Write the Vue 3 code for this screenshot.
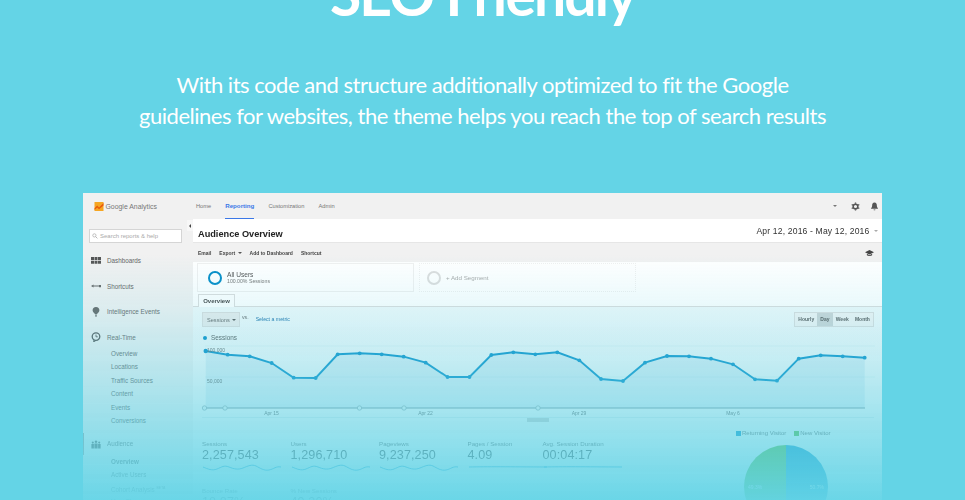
<script setup>
import { computed } from 'vue'

const navTop = [
  { label: 'Dashboards', icon: 'grid' },
  { label: 'Shortcuts', icon: 'arrow' },
  { label: 'Intelligence Events', icon: 'bulb' },
  { label: 'Real-Time', icon: 'clock' }
]
const realtime = ['Overview', 'Locations', 'Traffic Sources', 'Content', 'Events', 'Conversions']

const points = [
  [205.7, 351], [227.7, 354.7], [249.7, 356.3], [271.7, 363], [293.7, 377.7], [315.7, 378],
  [337.7, 354.3], [359.7, 353.3], [381.7, 354.3], [403.7, 356.7], [425.7, 362.7], [447.5, 377],
  [469.5, 377], [491.3, 355], [513.3, 352.3], [535.3, 354.3], [557.3, 352.3], [579.3, 360.3],
  [601, 379], [623, 381], [645, 362.7], [667, 356], [689, 356.3], [711, 358.7], [733, 364.3],
  [755, 379.3], [777, 380.7], [798.7, 358.7], [820.7, 355.3], [842.7, 356.3], [864.7, 357.7]
]
const line = computed(() => points.map(p => p.join(',')).join(' '))
const area = computed(() => `205.7,408 ${line.value} 864.7,408`)
const xLabels = [
  { x: 271.5, t: 'Apr 15' },
  { x: 425.5, t: 'Apr 22' },
  { x: 579, t: 'Apr 29' },
  { x: 733, t: 'May 6' }
]
const annotations = [204.5, 225, 359.5, 404, 538]

const wave = 'M1 5 C6 7 10 9 15 7 S22 3 27 5 S36 8 41 6 S50 2 54 4 S62 9 67 8 S74 4 79 5'
const flat = 'M1 5 C20 4.6 40 4.8 79 5'
const metrics = [
  { label: 'Sessions', value: '2,257,543', spark: wave },
  { label: 'Users', value: '1,296,710', spark: wave },
  { label: 'Pageviews', value: '9,237,250', spark: wave },
  { label: 'Pages / Session', value: '4.09', spark: flat },
  { label: 'Avg. Session Duration', value: '00:04:17', spark: flat }
]
const metrics2 = [
  { label: 'Bounce Rate', value: '18.87%' },
  { label: '% New Sessions', value: '49.30%' }
]
</script>

<template>
  <div class="page">
    <h1 class="title">SEO Friendly</h1>
    <p class="lead">With its code and structure additionally optimized to fit the Google<br>guidelines for websites, the theme helps you reach the top of search results</p>

    <div class="shot">
      <div class="shot-inner">
        <header class="topbar">
          <div class="brand">
            <svg class="ga-logo" viewBox="0 0 10 10">
              <rect width="10" height="10" fill="#f6a623" />
              <path d="M0 7 L3 4 L5 6 L10 1 L10 4 L5 8 L3 6 L0 9Z" fill="#e8590c" />
            </svg>
            <span>Google Analytics</span>
          </div>
          <nav class="topnav">
            <a>Home</a>
            <a class="on">Reporting</a>
            <a>Customization</a>
            <a>Admin</a>
          </nav>
          <div class="topicons">
            <i class="caret"></i>
            <svg class="ico gear" viewBox="0 0 10 10">
              <circle cx="5" cy="5" r="2.6" fill="none" stroke="#555" stroke-width="1.7" />
              <path d="M5 0.5V2M5 8V9.5M0.8 2.8L2.2 3.6M7.8 6.4L9.2 7.2M0.8 7.2L2.2 6.4M7.8 3.6L9.2 2.8" stroke="#555" stroke-width="1.5" />
            </svg>
            <svg class="ico" viewBox="0 0 10 10">
              <path d="M5 .5C3 .5 2.4 2 2.4 3.8 2.4 6 1.2 6.6 1 7.6H9C8.8 6.6 7.6 6 7.6 3.8 7.6 2 7 .5 5 .5ZM4 8.2H6C6 9.6 4 9.6 4 8.2Z" fill="#555" />
            </svg>
          </div>
        </header>

        <div class="body">
          <aside class="side">
            <div class="search">
              <svg class="search-ico" viewBox="0 0 10 10">
                <circle cx="4" cy="4" r="2.7" fill="none" stroke="#aaa" stroke-width="1.2" />
                <path d="M6 6L9 9" stroke="#aaa" stroke-width="1.4" />
              </svg>
              Search reports &amp; help
            </div>
            <div class="nav-row" v-for="item in navTop" :key="item.label">
              <svg class="nav-ico" viewBox="0 0 10 10">
                <path v-if="item.icon === 'grid'" d="M0 1H3V4H0ZM3.5 1H6.5V4H3.5ZM7 1H10V4H7ZM0 4.7H3V7.7H0ZM3.5 4.7H6.5V7.7H3.5ZM7 4.7H10V7.7H7Z" fill="#555" />
                <path v-else-if="item.icon === 'arrow'" d="M0 5L2.5 3.5V4.6H10V5.6H2.5V6.5ZM8 4H10V6.2H8Z" fill="#666" />
                <path v-else-if="item.icon === 'bulb'" d="M5 0C2.8 0 1.6 1.6 1.6 3.2 1.6 5 3.4 5.8 4 7.2H6C6.6 5.8 8.4 5 8.4 3.2 8.4 1.6 7.2 0 5 0ZM4.2 7.8H5.8L5.4 10H4.6Z" fill="#666" />
                <g v-else>
                  <circle cx="5" cy="4.6" r="3.8" fill="none" stroke="#555" stroke-width="1.3" />
                  <path d="M5 2.6V4.8H6.8M3 8L2.6 10 5 8.4" fill="none" stroke="#555" stroke-width=".9" />
                </g>
              </svg>
              {{ item.label }}
            </div>
            <div class="sub-list">
              <div class="sub" v-for="s in realtime" :key="s">{{ s }}</div>
            </div>
            <div class="nav-row audience">
              <svg class="nav-ico" viewBox="0 0 10 10">
                <path d="M5 1.4a1.3 1.3 0 1 1-.01 0ZM1.8 2.6a1 1 0 1 1-.01 0ZM8.2 2.6a1 1 0 1 1-.01 0ZM3.4 4.4H6.6V9.4H3.4ZM.4 5H2.9V9.4H.4ZM7.1 5H9.6V9.4H7.1Z" fill="#555" />
              </svg>
              Audience
            </div>
            <div class="sub-list">
              <div class="sub strong">Overview</div>
              <div class="sub">Active Users</div>
              <div class="sub">Cohort Analysis <sup>BETA</sup></div>
              <div class="sub">User Flow</div>
            </div>
          </aside>

          <main class="main">
            <div class="collapse"></div>
            <div class="titlebar">
              <h2>Audience Overview</h2>
              <div class="dates">Apr 12, 2016 - May 12, 2016 <i class="caret light"></i></div>
            </div>
            <div class="toolbar">
              <span>Email</span>
              <span>Export <i class="caret tiny"></i></span>
              <span>Add to Dashboard</span>
              <span>Shortcut</span>
              <svg class="cap" viewBox="0 0 12 10">
                <path d="M6 1L12 4 6 7 0 4ZM2.5 6V8C4 9.4 8 9.4 9.5 8V6L6 8Z" fill="#444" />
              </svg>
            </div>
            <div class="segments">
              <div class="seg">
                <span class="ring"></span>
                <div>
                  <div class="seg-name">All Users</div>
                  <div class="seg-sub">100.00% Sessions</div>
                </div>
              </div>
              <div class="seg add">
                <span class="ring grey"></span>
                <div class="seg-add">+ Add Segment</div>
              </div>
            </div>
            <div class="tabs"><div class="tab">Overview</div></div>

            <div class="panel">
              <div class="controls">
                <div class="select">Sessions <i class="caret tiny"></i></div>
                <span class="vs">vs.</span>
                <a class="metric-link">Select a metric</a>
                <div class="btns">
                  <span>Hourly</span>
                  <span class="on">Day</span>
                  <span>Week</span>
                  <span>Month</span>
                </div>
              </div>
              <div class="legend"><i class="dot"></i>Sessions</div>

              <svg class="chart" viewBox="193 343 689 82" width="689" height="82">
                <line x1="205" y1="346" x2="875" y2="346" stroke="#dfeef2" stroke-width=".6" />
                <line x1="205" y1="377" x2="875" y2="377" stroke="#dfeef2" stroke-width=".6" />
                <polygon :points="area" fill="#058dc7" fill-opacity=".1" />
                <polyline :points="line" fill="none" stroke="#058dc7" stroke-width="1.9" />
                <circle v-for="(p, i) in points" :key="i" :cx="p[0]" :cy="p[1]" :r="i === 0 ? 2.2 : 1.9" fill="#058dc7" />
                <line x1="204" y1="408" x2="865" y2="408" stroke="#7d929b" stroke-width="1" />
                <text x="207" y="352" class="axis">100,000</text>
                <text x="207" y="383" class="axis">50,000</text>
                <text v-for="l in xLabels" :key="l.t" :x="l.x" y="415" text-anchor="middle" class="axis">{{ l.t }}</text>
                <circle v-for="a in annotations" :key="a" :cx="a" cy="408" r="2.2" fill="#e8f4f6" stroke="#8a9ea6" stroke-width=".7" />
                <line x1="202" y1="417.5" x2="874" y2="417.5" stroke="#cfdfe4" stroke-width=".6" />
                <rect x="527" y="418" width="22" height="4" fill="#ccc" />
              </svg>

              <div class="lower">
                <div class="metrics">
                  <div class="metric" v-for="m in metrics" :key="m.label">
                    <div class="m-label">{{ m.label }}</div>
                    <div class="m-value">{{ m.value }}</div>
                    <svg class="spark" viewBox="0 0 80 12" width="80" height="12">
                      <path :d="m.spark" fill="none" stroke="#058dc7" stroke-width=".8" />
                    </svg>
                  </div>
                  <div class="metric" v-for="m in metrics2" :key="m.label">
                    <div class="m-label">{{ m.label }}</div>
                    <div class="m-value">{{ m.value }}</div>
                  </div>
                </div>
                <div class="pie-box">
                  <div class="pie-legend">
                    <i class="sq blue"></i>Returning Visitor
                    <i class="sq green"></i>New Visitor
                  </div>
                  <div class="pie">
                    <span class="pct left">49.3%</span>
                    <span class="pct right">50.7%</span>
                  </div>
                </div>
              </div>
            </div>
          </main>
        </div>
      </div>
      <div class="fade"></div>
    </div>
  </div>
</template>

<style>
html, body {
  margin: 0;
  background: #64d4e6;
}
</style>

<style scoped>
.page {
  height: 500px;
  overflow: hidden;
  background: #64d4e6;
  color: #fff;
  font-family: "Lato", "Liberation Sans", sans-serif;
  text-align: center;
}
.title {
  margin: -41px 0 0;
  font-size: 57px;
  line-height: 70px;
  font-weight: 700;
  letter-spacing: -1.9px;
}
.lead {
  margin: 40px 0 0;
  font-size: 22px;
  line-height: 31px;
  letter-spacing: -.48px;
  font-weight: 400;
}
.shot {
  position: relative;
  width: 799px;
  height: 307px;
  margin: 62px auto 0;
  overflow: hidden;
  text-align: left;
}
.shot-inner {
  height: 100%;
  font-family: "Liberation Sans", Arial, sans-serif;
  color: #444;
  background: #fff;
  filter: blur(.35px);
}
.fade {
  position: absolute;
  inset: 0;
  background: linear-gradient(to bottom, rgba(100, 212, 230, 0) 20%, rgba(100, 212, 230, .14) 37%, rgba(100, 212, 230, .45) 62%, rgba(100, 212, 230, .96) 100%);
  pointer-events: none;
}

/* top bar */
.topbar {
  height: 26px;
  display: flex;
  align-items: center;
  background: #f1f1f1;
}
.brand {
  width: 113px;
  display: flex;
  align-items: center;
  padding-left: 11px;
  box-sizing: border-box;
  font-size: 6.9px;
  color: #777;
  white-space: nowrap;
}
.ga-logo {
  width: 10px;
  height: 9px;
  margin-right: 1.5px;
}
.topnav {
  display: flex;
  height: 100%;
  gap: 14px;
  font-size: 5.7px;
  color: #777;
}
.topnav a {
  display: flex;
  align-items: center;
  height: 100%;
  box-sizing: border-box;
}
.topnav a.on {
  color: #3b78e7;
  font-size: 6.2px;
  font-weight: 700;
  border-bottom: 1px solid #3b78e7;
}
.topicons {
  margin-left: auto;
  display: flex;
  align-items: center;
  gap: 10px;
  padding-right: 3px;
}
.ico {
  width: 9px;
  height: 9px;
}
.caret {
  display: inline-block;
  width: 0;
  height: 0;
  border: 2px solid transparent;
  border-top: 2.5px solid #777;
  border-bottom: 0;
  margin-right: 4px;
}
.caret.light {
  border-top-color: #aaa;
  margin: 0 0 2px 2px;
}
.caret.tiny {
  margin: 0 0 1px 1px;
  border-top-color: #555;
}

/* layout */
.body {
  display: flex;
  height: 281px;
}
.side {
  width: 110px;
  flex: none;
  box-sizing: border-box;
  background: #f1f1f1;
  padding-top: 10px;
  font-size: 6.3px;
  color: #666;
}
.search {
  display: flex;
  align-items: center;
  width: 93px;
  height: 14px;
  margin: 0 0 5px 6px;
  box-sizing: border-box;
  background: #fff;
  border: 1px solid #d5d5d5;
  color: #aaa;
  font-size: 6px;
  padding-left: 2px;
}
.search-ico {
  width: 6px;
  height: 6px;
  margin-right: 2px;
}
.nav-row {
  display: flex;
  align-items: center;
  height: 25.5px;
  padding-left: 8px;
  white-space: nowrap;
}
.nav-ico {
  width: 10px;
  height: 10px;
  margin-right: 6px;
}
.sub-list {
  margin-top: -3.2px;
}
.sub {
  height: 13.5px;
  line-height: 13.5px;
  padding-left: 28px;
  white-space: nowrap;
}
.sub.strong {
  font-weight: 700;
}
.sub sup {
  font-size: 3.5px;
}
.audience {
  margin-top: 4.7px;
  border-left: 1px solid #999;
  padding-left: 7px;
  height: 22px;
}
.audience + .sub-list {
  margin-top: 0;
}

.main {
  flex: 1;
  min-width: 0;
  position: relative;
  background: #fff;
}
.collapse {
  position: absolute;
  left: -6px;
  top: 1px;
  width: 6px;
  height: 11px;
  background: #f7f7f7;
  display: flex;
  align-items: center;
  justify-content: center;
}
.collapse::before {
  content: "";
  border: 2px solid transparent;
  border-right: 2px solid #444;
  border-left: 0;
}
.titlebar {
  height: 23px;
  display: flex;
  align-items: center;
  justify-content: space-between;
  padding: 0 4px 0 5px;
}
.titlebar h2 {
  margin: 6px 0 0;
  font-size: 9.2px;
  font-weight: 700;
  color: #222;
}
.dates {
  font-size: 8.6px;
  letter-spacing: .15px;
  color: #333;
  white-space: nowrap;
}
.toolbar {
  height: 20px;
  display: flex;
  align-items: center;
  gap: 8px;
  padding: 0 8px 0 5px;
  background: #f1f1f1;
  border-top: 1px solid #e6e6e6;
  box-sizing: border-box;
  font-size: 5px;
  font-weight: 700;
  color: #444;
}
.cap {
  width: 9px;
  height: 8px;
  margin-left: auto;
}
.segments {
  height: 32px;
  display: flex;
  gap: 5px;
  padding: 1px 0 0 4px;
  box-sizing: border-box;
}
.seg {
  width: 217px;
  height: 29px;
  display: flex;
  align-items: center;
  gap: 5px;
  padding-left: 10px;
  box-sizing: border-box;
  border: 1px solid #f0f0f0;
}
.seg.add {
  border-style: dotted;
  padding-left: 7px;
}
.ring {
  width: 14px;
  height: 14px;
  box-sizing: border-box;
  border-radius: 50%;
  border: 2.5px solid #058dc7;
}
.ring.grey {
  border-color: #ddd;
}
.seg-name {
  font-size: 6.6px;
  color: #555;
}
.seg-sub {
  font-size: 5.2px;
  color: #777;
}
.seg-add {
  font-size: 6.2px;
  color: #aaa;
}
.tabs {
  height: 13px;
  padding-left: 5px;
  box-sizing: border-box;
  border-bottom: 1px solid #ddd;
}
.tab {
  width: 37px;
  height: 13px;
  box-sizing: border-box;
  background: #fff;
  border: 1px solid #ddd;
  border-bottom: 0;
  text-align: center;
  font-size: 6px;
  line-height: 12px;
  font-weight: 700;
  color: #444;
}

/* chart panel */
.panel {
  background: linear-gradient(#f1f9fb, #fafafa 25%);
}
.controls {
  height: 25px;
  display: flex;
  align-items: center;
  padding: 0 8px 1px 9px;
  box-sizing: border-box;
  font-size: 5.2px;
}
.select {
  width: 38px;
  height: 15px;
  line-height: 15px;
  box-sizing: border-box;
  padding-left: 4px;
  background: #ececec;
  border: 1px solid #ddd;
  color: #666;
  font-size: 5.6px;
}
.vs {
  margin: -4px 0 0 2px;
  color: #666;
}
.metric-link {
  margin-left: 7px;
  color: #1a6fa8;
  font-size: 5.2px;
}
.btns {
  margin-left: auto;
  display: flex;
  border: 1px solid #ddd;
  height: 15px;
  box-sizing: border-box;
  background: #f4f4f4;
}
.btns span {
  line-height: 13px;
  padding: 0 3.1px;
  font-size: 5px;
  font-weight: 700;
  color: #555;
}
.btns span.on {
  background: #cfd4d5;
}
.legend {
  height: 11px;
  display: flex;
  align-items: center;
  padding-left: 10px;
  font-size: 6.4px;
  color: #555;
}
.dot {
  width: 4px;
  height: 4px;
  border-radius: 50%;
  background: #058dc7;
  margin-right: 4px;
}
.chart {
  display: block;
}
.axis {
  font-size: 5px;
  fill: #666;
  font-family: "Liberation Sans", Arial, sans-serif;
}
.lower {
  display: flex;
  padding: 13px 0 0 9px;
}
.metrics {
  width: 424px;
  display: grid;
  grid-template-columns: 88.5px 88.5px 88.5px 75px 83px;
  grid-auto-rows: 47px;
}
.metric {
  box-sizing: border-box;
}
.m-label {
  font-size: 6.2px;
  line-height: 11px;
  color: #666;
}
.m-value {
  font-size: 12.6px;
  line-height: 13px;
  letter-spacing: .1px;
  color: #444;
}
.spark {
  display: block;
}
.pie-box {
  margin-left: 110px;
  width: 100px;
  margin-top: -12px;
}
.pie-legend {
  font-size: 6px;
  color: #666;
  white-space: nowrap;
  height: 14px;
  display: flex;
  align-items: center;
}
.sq {
  width: 5px;
  height: 5px;
  margin-right: 1px;
}
.sq.blue {
  background: #058dc7;
}
.sq.green {
  background: #50b432;
  margin-left: 8px;
}
.pie {
  position: relative;
  width: 84px;
  height: 84px;
  margin: 5px 0 0 8px;
  border-radius: 50%;
  background: linear-gradient(to right, #50b432 50%, #058dc7 50%);
}
.pct {
  position: absolute;
  top: 39px;
  font-size: 5px;
  color: #fff;
}
.pct.left { left: 4px; }
.pct.right { right: 4px; }
</style>
